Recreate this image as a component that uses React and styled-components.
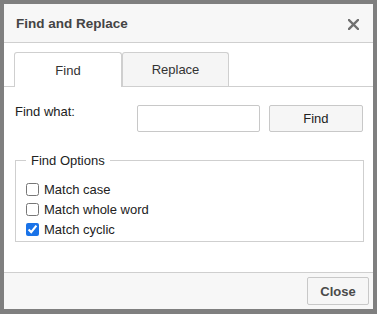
import React from 'react'
import styled, { createGlobalStyle } from 'styled-components'

const GlobalStyle = createGlobalStyle`
  html, body {
    margin: 0;
    padding: 0;
    background: #7f7f7f;
    font-family: "Liberation Sans", Arial, sans-serif;
  }
`;

const Backdrop = styled.div`
  width: 377px;
  height: 314px;
  box-sizing: border-box;
  padding: 4px;
  background: #7f7f7f;
  overflow: hidden;
`;

const Dialog = styled.div`
  width: 369px;
  height: 305px;
  background: #fff;
  display: flex;
  flex-direction: column;
  box-sizing: border-box;
`;

const Header = styled.div`
  height: 38px;
  flex: none;
  display: flex;
  align-items: center;
  justify-content: space-between;
  padding: 0 14px 0 12px;
  background: #f7f7f7;
  border-bottom: 1px solid #cfcfcf;
`;

const Title = styled.div`
  font-size: 13.5px;
  font-weight: bold;
  color: #444;
  margin-top: 1px;
`;

const CloseX = styled.svg`
  width: 11px;
  height: 11px;
  margin-top: 2px;
`;

const TabStrip = styled.div`
  display: flex;
  padding: 9px 0 0 10px;
  border-bottom: 1px solid #cfcfcf;
`;

const Tab = styled.div`
  width: ${p => p.$w}px;
  display: flex;
  align-items: center;
  justify-content: center;
  font-size: 13px;
  color: #333;
  border: 1px solid #cfcfcf;
  border-bottom: none;
  border-radius: 3px 3px 0 0;
  background: ${p => (p.$active ? '#fff' : '#f5f5f5')};
  margin-bottom: ${p => (p.$active ? '-1px' : '0')};
  height: ${p => (p.$active ? '34px' : '33px')};
`;

const Content = styled.div`
  flex: 1;
  padding: 18px 10px 0 11px;
`;

const Row = styled.div`
  display: flex;
  align-items: flex-start;
`;

const Label = styled.div`
  width: 123px;
  font-size: 13px;
  color: #222;
  margin-top: -1px;
`;

const TextInput = styled.input`
  width: 123px;
  height: 27px;
  box-sizing: border-box;
  border: 1px solid #c8c8c8;
  border-radius: 2px;
  padding: 0 5px;
  font-family: inherit;
  font-size: 13px;
  outline: none;
`;

const Button = styled.button`
  width: ${p => p.$w || 95}px;
  height: ${p => p.$h || 27}px;
  box-sizing: border-box;
  border: 1px solid #c8c8c8;
  border-radius: 2px;
  background: #f6f6f6;
  font-family: inherit;
  font-size: 13px;
  font-weight: ${p => (p.$bold ? 'bold' : 'normal')};
  color: ${p => (p.$bold ? '#4a4a4a' : '#222')};
  padding: 0;
  cursor: pointer;
`;

const FindBtn = styled(Button)`
  margin-left: 9px;
`;

const Options = styled.fieldset`
  margin: 21px 0 0 0;
  width: 349px;
  height: 89px;
  box-sizing: border-box;
  border: 1px solid #cfcfcf;
  padding: 15px 0 0 10px;
  display: flex;
  flex-direction: column;
  gap: 7px;
`;

const Legend = styled.legend`
  font-size: 13px;
  color: #222;
  padding: 0 5px;
  margin-left: 0;
`;

const Check = styled.label`
  display: flex;
  align-items: center;
  height: 13px;
  font-size: 13px;
  color: #222;
  input {
    width: 13px;
    height: 13px;
    margin: 0 5px 0 0;
    accent-color: #1a73e8;
  }
`;

const Footer = styled.div`
  height: 36px;
  flex: none;
  display: flex;
  align-items: center;
  justify-content: flex-end;
  padding: 0 4px 0 0;
  background: #f7f7f7;
  border-top: 1px solid #cfcfcf;
`;

export default function App() {
  return (
    <>
      <GlobalStyle />
      <Backdrop>
        <Dialog>
          <Header>
            <Title>Find and Replace</Title>
            <CloseX viewBox="0 0 11 11">
              <path d="M1 1 L10 10 M10 1 L1 10" stroke="#707070" strokeWidth="2.4" strokeLinecap="square" />
            </CloseX>
          </Header>
          <TabStrip>
            <Tab $active $w={106}>Find</Tab>
            <Tab $w={105}>Replace</Tab>
          </TabStrip>
          <Content>
            <Row>
              <Label>Find what:</Label>
              <TextInput />
              <FindBtn>Find</FindBtn>
            </Row>
            <Options>
              <Legend>Find Options</Legend>
              <Check><input type="checkbox" />Match case</Check>
              <Check><input type="checkbox" />Match whole word</Check>
              <Check><input type="checkbox" defaultChecked />Match cyclic</Check>
            </Options>
          </Content>
          <Footer>
            <Button $w={62} $h={28} $bold>Close</Button>
          </Footer>
        </Dialog>
      </Backdrop>
    </>
  );
}
